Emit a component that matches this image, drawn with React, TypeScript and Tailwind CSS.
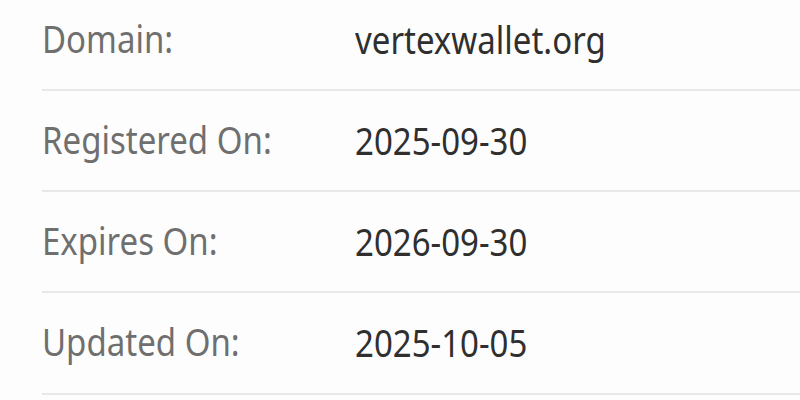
const ROWS = [
  { label: "Domain:", value: "vertexwallet.org" },
  { label: "Registered On:", value: "2025-09-30" },
  { label: "Expires On:", value: "2026-09-30" },
  { label: "Updated On:", value: "2025-10-05" },
];

export default function App() {
  return (
    <div className="w-[800px] h-[400px] overflow-hidden bg-[#fdfdfd] font-['Noto_Sans',sans-serif]">
      <div className="-mt-[10.6px] ml-[42px] flex flex-col">
        {ROWS.map((row) => (
          <div
            key={row.label}
            className="h-[101.3px] flex items-center border-b-2 border-[#e8e8e8]"
          >
            <div className="w-[313px] shrink-0">
              <span className="inline-block text-[33px] leading-none text-[#6f6f6f] scale-y-[1.15]">
                {row.label}
              </span>
            </div>
            <span className="inline-block text-[33px] leading-none text-[#2f2f2f] scale-y-[1.15]">
              {row.value}
            </span>
          </div>
        ))}
      </div>
    </div>
  );
}
